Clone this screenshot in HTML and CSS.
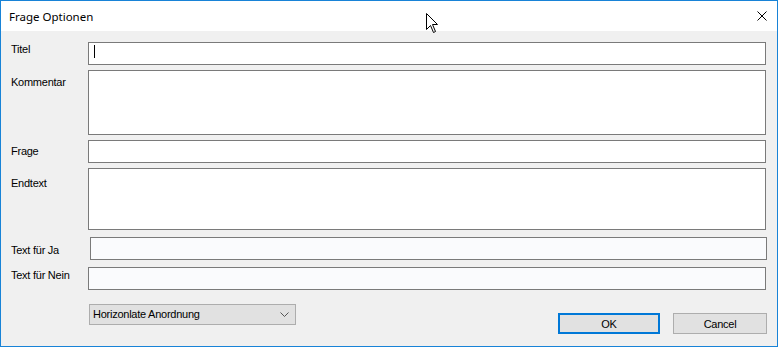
FILE: index.html
```html
<!DOCTYPE html>
<html lang="de">
<head>
  <meta charset="UTF-8">
  <title>Frage Optionen</title>
  <link rel="stylesheet" href="styles.css">
</head>
<body>
  <div class="window">
    <div class="titlebar">
      <span class="caption">Frage Optionen</span>
      <svg class="close" width="10" height="10" viewBox="0 0 10 10">
        <path d="M0.5 0.5 L9.5 9.5 M9.5 0.5 L0.5 9.5" stroke="#000" stroke-width="1" fill="none"/>
      </svg>
    </div>

    <div class="content">
      <div class="row">
        <label class="label lbl-titel">Titel</label>
        <div class="field"><span class="caret"></span></div>
      </div>
      <div class="row">
        <label class="label lbl-kommentar">Kommentar</label>
        <div class="field area-tall"></div>
      </div>
      <div class="row">
        <label class="label lbl-frage">Frage</label>
        <div class="field"></div>
      </div>
      <div class="row">
        <label class="label lbl-endtext">Endtext</label>
        <div class="field area"></div>
      </div>
      <div class="row row-wide">
        <label class="label lbl-ja">Text für Ja</label>
        <div class="field soft shifted"></div>
      </div>
      <div class="row row-wide">
        <label class="label lbl-nein">Text für Nein</label>
        <div class="field soft"></div>
      </div>

      <div class="footer">
        <div class="combo">
          <span>Horizonlate Anordnung</span>
          <svg width="9" height="5" viewBox="0 0 9 5">
            <path d="M0.5 0.5 L4.5 4.5 L8.5 0.5" stroke="#555" stroke-width="1" fill="none"/>
          </svg>
        </div>
        <div class="buttons">
          <button class="btn btn-default">OK</button>
          <button class="btn">Cancel</button>
        </div>
      </div>
    </div>

    <svg class="pointer" width="13" height="21" viewBox="0 0 13 21">
      <path d="M0.5 0.5 L0.5 16.5 L4.5 12.5 L7.5 19.5 L9.5 18.5 L6.5 11.5 L11.5 11.5 Z" fill="#fff" stroke="#000" stroke-width="1" stroke-linejoin="miter"/>
    </svg>
  </div>
</body>
</html>
```

FILE: styles.css
```css
* {
  margin: 0;
  padding: 0;
  box-sizing: border-box;
}

body {
  width: 778px;
  height: 347px;
  overflow: hidden;
  font-family: "Liberation Sans", Arial, sans-serif;
  font-size: 11px;
  letter-spacing: -0.25px;
  color: #000;
}

.window {
  position: relative;
  width: 778px;
  height: 347px;
  border: 1px solid #1883d7;
  background: #f0f0f0;
  display: flex;
  flex-direction: column;
}

.titlebar {
  height: 30px;
  background: #fff;
  display: flex;
  align-items: center;
  justify-content: space-between;
  padding: 0 10px 0 8px;
}

.caption {
  font-family: "Segoe UI", "Noto Sans", sans-serif;
  font-size: 11.5px;
  letter-spacing: 0;
  line-height: 16px;
  margin-top: 1px;
}

.close {
  display: block;
}

.content {
  flex: 1;
  padding: 11px 11px 0 10px;
  display: flex;
  flex-direction: column;
}

.row {
  display: flex;
  margin-bottom: 5px;
}

.row-wide {
  margin-top: 2px;
}

.label {
  width: 77px;
  flex: none;
  line-height: 13px;
}

.lbl-titel { padding-top: 1px; }
.lbl-kommentar { padding-top: 6px; }
.lbl-frage { padding-top: 5px; }
.lbl-endtext { padding-top: 9px; }
.lbl-ja { padding-top: 7px; }
.lbl-nein { padding-top: 2px; }

.field {
  flex: 1;
  height: 23px;
  border: 1px solid #7a7a7a;
  background: #fff;
  position: relative;
}

.area-tall {
  height: 65px;
}

.area {
  height: 62px;
}

.soft {
  background: #fafbfd;
}

.shifted {
  margin-left: 2px;
  margin-right: -1px;
}

.caret {
  position: absolute;
  left: 5px;
  top: 2px;
  width: 1px;
  height: 13px;
  background: #000;
}

.footer {
  display: flex;
  margin-top: 9px;
  padding-left: 78px;
}

.combo {
  width: 207px;
  height: 21px;
  border: 1px solid #adadad;
  background: #e1e1e1;
  display: flex;
  align-items: center;
  justify-content: space-between;
  padding: 0 6px 0 3px;
}

.combo span {
  line-height: 13px;
}

.combo svg {
  display: block;
}

.buttons {
  display: flex;
  gap: 13px;
  margin-left: auto;
  margin-right: -1px;
  padding-top: 9px;
}

.btn {
  width: 94px;
  height: 21px;
  border: 1px solid #adadad;
  background: #e1e1e1;
  font-family: "Liberation Sans", Arial, sans-serif;
  font-size: 11px;
  letter-spacing: -0.25px;
  color: #000;
}

.btn-default {
  width: 102px;
  border: 2px solid #0078d7;
}

.pointer {
  position: absolute;
  left: 425px;
  top: 12px;
}
```
